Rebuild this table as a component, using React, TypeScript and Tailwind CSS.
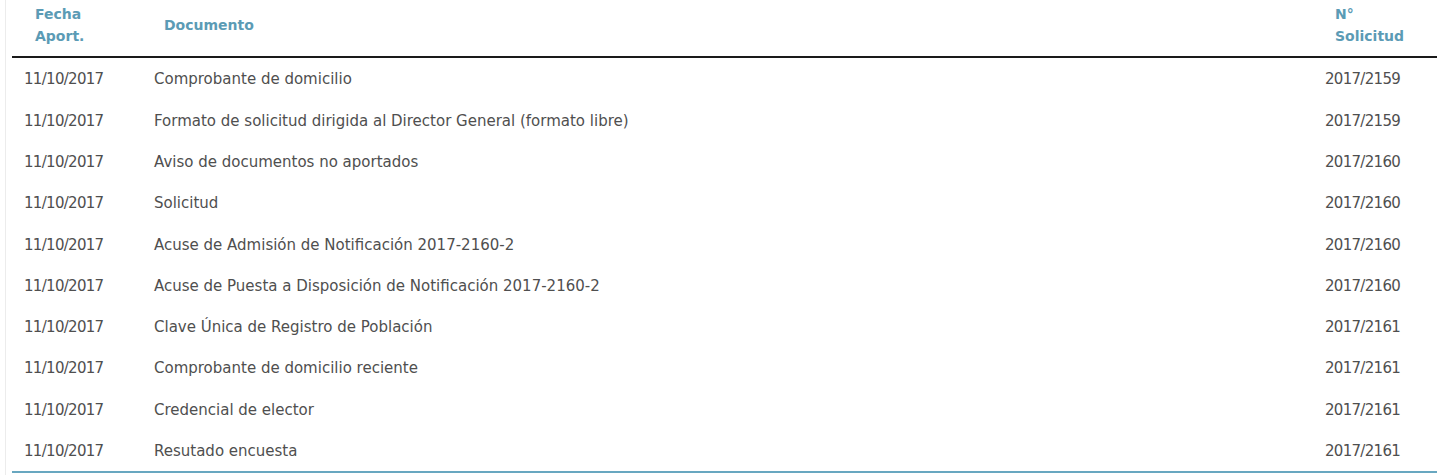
const filas = [
  { fecha: '11/10/2017', documento: 'Comprobante de domicilio', solicitud: '2017/2159' },
  { fecha: '11/10/2017', documento: 'Formato de solicitud dirigida al Director General (formato libre)', solicitud: '2017/2159' },
  { fecha: '11/10/2017', documento: 'Aviso de documentos no aportados', solicitud: '2017/2160' },
  { fecha: '11/10/2017', documento: 'Solicitud', solicitud: '2017/2160' },
  { fecha: '11/10/2017', documento: 'Acuse de Admisión de Notificación 2017-2160-2', solicitud: '2017/2160' },
  { fecha: '11/10/2017', documento: 'Acuse de Puesta a Disposición de Notificación 2017-2160-2', solicitud: '2017/2160' },
  { fecha: '11/10/2017', documento: 'Clave Única de Registro de Población', solicitud: '2017/2161' },
  { fecha: '11/10/2017', documento: 'Comprobante de domicilio reciente', solicitud: '2017/2161' },
  { fecha: '11/10/2017', documento: 'Credencial de elector', solicitud: '2017/2161' },
  { fecha: '11/10/2017', documento: 'Resutado encuesta', solicitud: '2017/2161' },
];

export default function App() {
  return (
    <div className="w-[1444px] h-[475px] bg-white font-['DejaVu_Sans',sans-serif] overflow-hidden">
      <div className="ml-[5px] h-full border-l border-[#ececec] pl-[6px] pr-[7px]">
        {/* Cabecera */}
        <div className="grid grid-cols-[130px_1fr_124px] h-[58px] border-b-2 border-[#1a1a1a] text-[14px] font-bold leading-[22px] text-[#5b9bb5] pb-[9px] pt-[3px]">
          <div className="pl-[23px] self-center">
            Fecha
            <br />
            Aport.
          </div>
          <div className="pl-[22px] self-center">Documento</div>
          <div className="pl-[22px] self-center">
            N°
            <br />
            Solicitud
          </div>
        </div>

        {/* Filas */}
        <div className="border-b-2 border-[#68a7c0]">
          {filas.map((fila, i) => (
            <div
              key={i}
              className="grid grid-cols-[130px_1fr_124px] h-[41.3px] items-center pt-[2px] text-[15px] text-[#4f4f4f]"
            >
              <div className="pl-[12px] tracking-[-0.7px]">{fila.fecha}</div>
              <div className="pl-[12px]">{fila.documento}</div>
              <div className="pl-[12px] tracking-[-0.7px]">{fila.solicitud}</div>
            </div>
          ))}
        </div>
      </div>
    </div>
  );
}
